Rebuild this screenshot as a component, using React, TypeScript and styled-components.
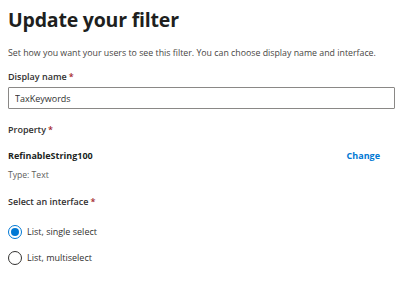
import React, { useState } from "react";
import styled, { createGlobalStyle } from "styled-components";

const GlobalStyle = createGlobalStyle`
  html, body {
    margin: 0;
    padding: 0;
    background: #ffffff;
  }
  body {
    font-family: "Open Sans", "Noto Sans", "Liberation Sans", sans-serif;
    color: #323130;
  }
`;

const Panel = styled.div`
  width: 400px;
  height: 283px;
  box-sizing: border-box;
  padding: 6px 5px 0 8px;
  overflow: hidden;
`;

const Title = styled.h1`
  margin: 0;
  font-size: 19.5px;
  line-height: 28px;
  font-weight: 700;
  color: #201f1e;
  letter-spacing: -0.2px;
`;

const Intro = styled.p`
  margin: 12px 0 0;
  font-size: 8.8px;
  line-height: 14px;
  color: #484644;
`;

const Label = styled.div<{ $gap?: number }>`
  margin-top: ${(p) => p.$gap ?? 0}px;
  font-size: 9px;
  line-height: 14px;
  font-weight: 600;
  color: #323130;

  span {
    color: #a4262c;
    margin-left: 2px;
  }
`;

const Input = styled.input`
  display: block;
  box-sizing: border-box;
  width: 387px;
  height: 22px;
  margin-top: 3px;
  padding: 0 6px;
  border: 1px solid #8a8886;
  border-radius: 1px;
  font-family: inherit;
  font-size: 9px;
  color: #323130;
  outline: none;
`;

const PropertyRow = styled.div`
  display: flex;
  justify-content: space-between;
  align-items: center;
  margin-top: 12px;
  padding-right: 15px;
`;

const PropertyName = styled.div`
  font-size: 9px;
  line-height: 14px;
  font-weight: 700;
  color: #201f1e;
`;

const ChangeLink = styled.a`
  font-size: 9px;
  line-height: 14px;
  font-weight: 700;
  color: #0078d4;
  text-decoration: none;
  cursor: pointer;
`;

const TypeText = styled.div`
  margin-top: 5px;
  font-size: 8.6px;
  line-height: 14px;
  color: #605e5c;
`;

const Options = styled.div`
  display: flex;
  flex-direction: column;
  gap: 12px;
  margin-top: 16px;
`;

const Option = styled.label`
  display: flex;
  align-items: center;
  gap: 5px;
  font-size: 9px;
  line-height: 14px;
  color: #323130;
  cursor: pointer;
`;

const Circle = styled.span<{ $on: boolean }>`
  box-sizing: border-box;
  width: 14px;
  height: 14px;
  border-radius: 50%;
  border: 1px solid ${(p) => (p.$on ? "#0078d4" : "#323130")};
  display: flex;
  align-items: center;
  justify-content: center;

  &::after {
    content: "";
    width: 8px;
    height: 8px;
    border-radius: 50%;
    background: ${(p) => (p.$on ? "#0078d4" : "transparent")};
  }
`;

const choices = ["List, single select", "List, multiselect"];

export default function App() {
  const [picked, setPicked] = useState(0);
  return (
    <Panel>
      <GlobalStyle />
      <Title>Update your filter</Title>
      <Intro>
        Set how you want your users to see this filter. You can choose display
        name and interface.
      </Intro>
      <Label $gap={10}>
        Display name<span>*</span>
      </Label>
      <Input defaultValue="TaxKeywords" />
      <Label $gap={14}>
        Property<span>*</span>
      </Label>
      <PropertyRow>
        <PropertyName>RefinableString100</PropertyName>
        <ChangeLink>Change</ChangeLink>
      </PropertyRow>
      <TypeText>Type: Text</TypeText>
      <Label $gap={13}>
        Select an interface<span>*</span>
      </Label>
      <Options>
        {choices.map((c, i) => (
          <Option key={c} onClick={() => setPicked(i)}>
            <Circle $on={picked === i} />
            {c}
          </Option>
        ))}
      </Options>
    </Panel>
  );
}
